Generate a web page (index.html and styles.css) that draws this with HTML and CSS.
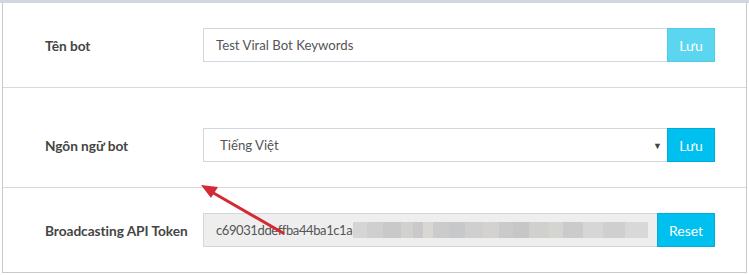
FILE: index.html
```html
<!DOCTYPE html>
<html>
<head>
<meta charset="utf-8">
<link rel="stylesheet" href="styles.css">
</head>
<body>
<div class="topbar"></div>
<div class="box">
  <div class="row">
    <div class="label">Tên bot</div>
    <div class="group">
      <div class="field field-wide">Test Viral Bot Keywords</div>
      <div class="btn btn-light">Lưu</div>
    </div>
  </div>
  <div class="row row-tall">
    <div class="label">Ngôn ngữ bot</div>
    <div class="group">
      <div class="field field-wide field-select"><span class="sel-text">Tiếng Việt</span><span class="caret">▼</span></div>
      <div class="btn">Lưu</div>
    </div>
  </div>
  <div class="row row-last">
    <div class="label">Broadcasting API Token</div>
    <div class="group">
      <div class="field field-token field-disabled"><span class="token">c69031ddeffba44ba1c1a</span><span class="blur"></span></div>
      <div class="btn btn-reset">Reset</div>
    </div>
  </div>
  <svg class="arrow" width="90" height="56" viewBox="0 0 90 56">
    <line x1="85" y1="52" x2="12" y2="10" stroke="#d42a33" stroke-width="3" stroke-linecap="round"/>
    <polygon points="3,4 20,6 13,17" fill="#d42a33"/>
  </svg>
</div>
</body>
</html>
```
FILE: styles.css
```css
* { box-sizing: border-box; }
html, body { margin: 0; padding: 0; background: #fff; }
body { font-family: "Lato", "Noto Sans", sans-serif; color: #555; width: 749px; height: 275px; overflow: hidden; }
.topbar { height: 3px; background: #d2d6de; }
.box {
  position: relative;
  margin-left: 2px;
  width: 745px;
  border-left: 1px solid #c9c9c9;
  border-right: 1px solid #c9c9c9;
  border-bottom: 1px solid #c9c9c9;
}
.row {
  display: flex;
  align-items: center;
  height: 85px;
  padding: 0 0 0 42px;
  border-bottom: 1px solid #d9d9d9;
}
.row-tall { height: 100px; padding-top: 15px; }
.row-last { border-bottom: none; height: 84px; }
.label {
  width: 158px;
  font-weight: 700;
  font-size: 13.7px;
  color: #454545;
  letter-spacing: -0.05px;
}
.group { display: flex; height: 34px; }
.field {
  display: flex;
  align-items: center;
  height: 34px;
  border: 1px solid #d2d6de;
  border-right: none;
  padding-left: 12px;
  font-size: 13.2px;
  color: #555;
}
.field-wide { width: 464px; }
.field-select { padding-left: 16px; justify-content: space-between; padding-right: 5px; }
.caret { font-size: 9px; color: #444; }
.field-token { width: 454px; background: #eee; padding-right: 9px; }
.token { font-size: 13px; letter-spacing: -0.4px; margin-right: 1px; }
.blur {
  flex: 1;
  height: 16px;
  background: linear-gradient(90deg,
    #d5d5d5 0 14px, #cfcfcf 14px 30px, #c9c9c9 30px 48px, #d1d1cf 48px 60px,
    #c9c9c9 60px 70px, #d8d7d3 70px 80px, #cbcbcb 80px 96px, #c6c8c9 96px 112px,
    #cfcfcf 112px 130px, #d3d2cf 130px 146px, #cacaca 146px 160px, #c6c6c6 160px 176px,
    #d0d0cf 176px 196px, #d4d4d0 196px 210px, #cbcbcb 210px 230px, #d6d6d6 230px 250px,
    #cfcfcf 250px 272px, #d8d8d8 272px);
}
.btn {
  display: flex;
  align-items: center;
  justify-content: center;
  width: 48px;
  height: 34px;
  background: #00c0ef;
  border: 1px solid #00acd6;
  color: #fff;
  font-size: 14px;
}
.btn-light { background: #5bd6f1; border-color: #50cbe6; }
.btn-reset { width: 58px; }
.arrow { position: absolute; left: 195px; top: 178px; }
```
